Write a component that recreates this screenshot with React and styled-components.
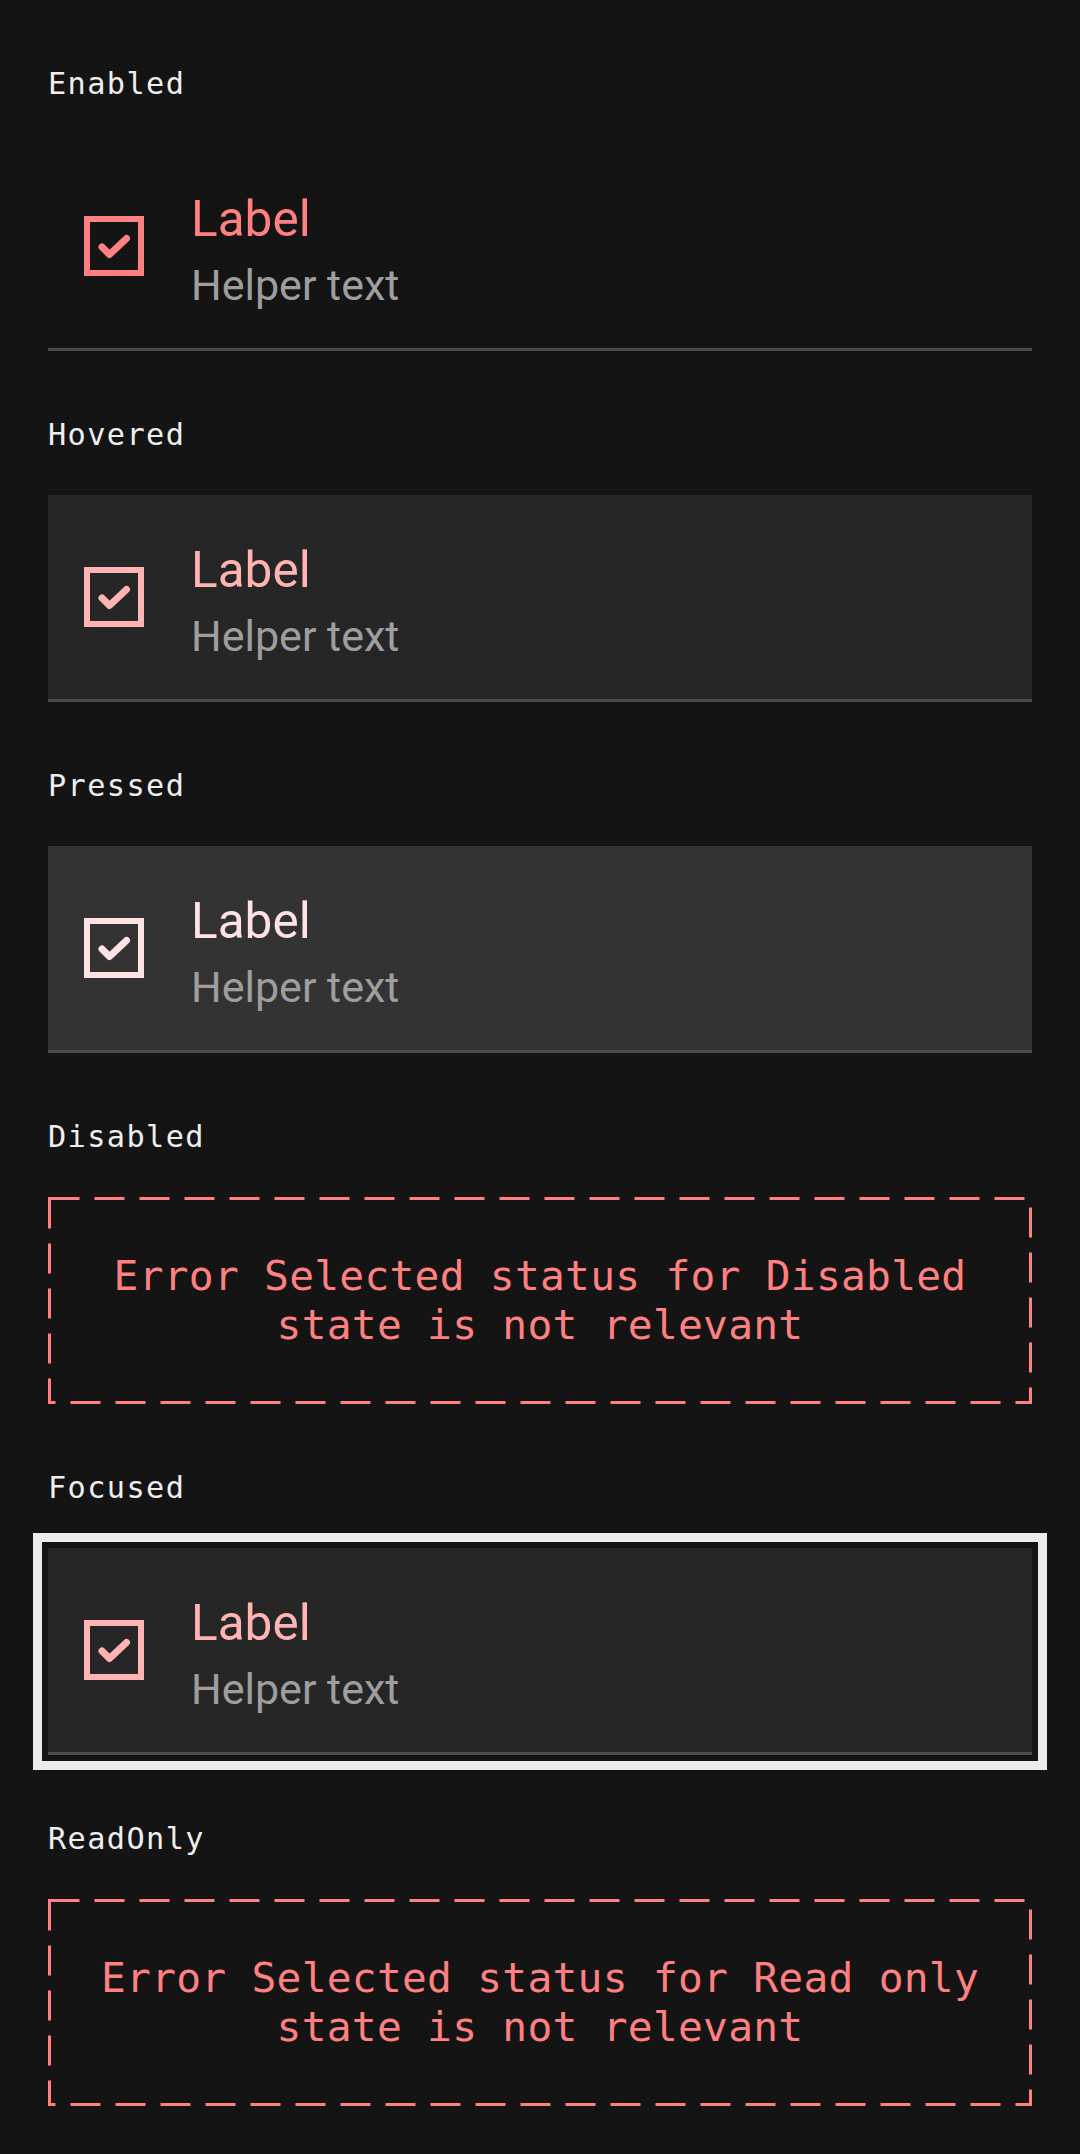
import React from "react";
import styled, { createGlobalStyle, css } from "styled-components";

const GlobalStyle = createGlobalStyle`
  html, body {
    margin: 0;
    padding: 0;
    background: #141414;
  }
  * { box-sizing: border-box; }
`;

const tones = {
  enabled: { accent: "#ff8080", bg: "transparent" },
  hovered: { accent: "#ffb3b3", bg: "#262626" },
  pressed: { accent: "#ffe3e3", bg: "#333333" },
  focused: { accent: "#ffb3b3", bg: "#262626" },
};

const Page = styled.main`
  display: flex;
  flex-direction: column;
  gap: 69px;
  padding: 69px 48px 48px;
  min-height: 2154px;
  background: #141414;
`;

const Section = styled.section`
  display: flex;
  flex-direction: column;
`;

const StateTitle = styled.h2`
  margin: 0 0 45px;
  font-family: "DejaVu Sans Mono", "Liberation Mono", monospace;
  font-weight: 400;
  font-size: 30.25px;
  line-height: 30px;
  letter-spacing: 1.4px;
  color: #eeeeee;
`;

const Card = styled.div`
  height: 207px;
  display: flex;
  align-items: center;
  gap: 47px;
  padding-left: 36px;
  background: ${(p) => tones[p.$state].bg};
  border-bottom: 3px solid #4b4b4b;
  ${(p) =>
    p.$state === "focused" &&
    css`
      outline: 9px solid #ececec;
      outline-offset: 6px;
    `}
`;

const TextCol = styled.div`
  display: flex;
  flex-direction: column;
`;

const Label = styled.span`
  font-family: Roboto, "Noto Sans", sans-serif;
  font-size: 49.5px;
  line-height: 77px;
  color: ${(p) => tones[p.$state].accent};
`;

const Helper = styled.span`
  font-family: Roboto, "Noto Sans", sans-serif;
  font-size: 43px;
  line-height: 54px;
  color: #9e9e9e;
`;

const ErrorBox = styled.div`
  position: relative;
  height: 207px;
  display: flex;
  align-items: center;
  justify-content: center;
  padding: 0 24px;
`;

const DashFrame = styled.svg`
  position: absolute;
  inset: 0;
  width: 100%;
  height: 100%;
  pointer-events: none;
`;

const ErrorText = styled.p`
  margin: 0;
  text-align: center;
  font-family: "DejaVu Sans Mono", "Liberation Mono", monospace;
  font-size: 41.25px;
  line-height: 48.5px;
  letter-spacing: 0.25px;
  color: #ff8080;
`;

const CheckIcon = ({ color }) => (
  <svg width="60" height="60" viewBox="0 0 60 60" style={{ flexShrink: 0 }}>
    <rect x="3" y="3" width="54" height="54" fill="none" stroke={color} strokeWidth="6" />
    <path
      d="M18 31 L25.5 38.5 L42.5 22.5"
      fill="none"
      stroke={color}
      strokeWidth="7"
      strokeLinecap="round"
      strokeLinejoin="round"
    />
  </svg>
);

const CheckRow = ({ state }) => (
  <Card $state={state}>
    <CheckIcon color={tones[state].accent} />
    <TextCol>
      <Label $state={state}>Label</Label>
      <Helper>Helper text</Helper>
    </TextCol>
  </Card>
);

const ErrorPanel = ({ children }) => (
  <ErrorBox>
    <DashFrame viewBox="0 0 984 207" preserveAspectRatio="none">
      <rect
        x="1.5"
        y="1.5"
        width="981"
        height="204"
        fill="none"
        stroke="#ff8080"
        strokeWidth="3"
        strokeDasharray="30 15"
      />
    </DashFrame>
    <ErrorText>{children}</ErrorText>
  </ErrorBox>
);

const sections = [
  { title: "Enabled", state: "enabled" },
  { title: "Hovered", state: "hovered" },
  { title: "Pressed", state: "pressed" },
  { title: "Disabled", error: "Error Selected status for Disabled state is not relevant" },
  { title: "Focused", state: "focused" },
  { title: "ReadOnly", error: "Error Selected status for Read only state is not relevant" },
];

export default function App() {
  return (
    <>
      <GlobalStyle />
      <Page>
        {sections.map((s) => (
          <Section key={s.title}>
            <StateTitle>{s.title}</StateTitle>
            {s.error ? <ErrorPanel>{s.error}</ErrorPanel> : <CheckRow state={s.state} />}
          </Section>
        ))}
      </Page>
    </>
  );
}
